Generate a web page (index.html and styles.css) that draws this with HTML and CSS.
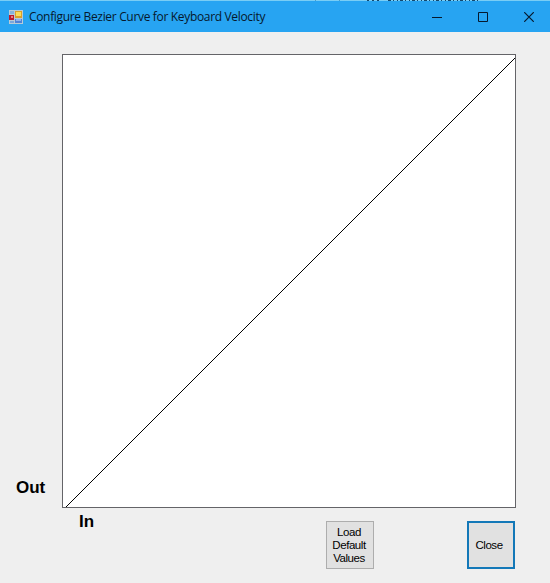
FILE: index.html
```html
<!DOCTYPE html>
<html lang="en">
<head>
<meta charset="utf-8">
<title>Configure Bezier Curve for Keyboard Velocity</title>
<link rel="stylesheet" href="styles.css">
</head>
<body>
<div class="window">
  <svg class="edge" width="550" height="1" viewBox="0 0 550 1" shape-rendering="crispEdges">
    <path d="M315 .5H316M339 .5H340" stroke="#4b9cc8"/>
    <path d="M367 .5H380" stroke="#14476c" stroke-dasharray="2 3"/>
    <path d="M388 .5H480" stroke="#14476c" stroke-dasharray="3 2 1 3 1 2"/>
  </svg>
  <header class="titlebar">
    <svg class="app-icon" width="14" height="14" viewBox="0 0 14 14" shape-rendering="crispEdges">
      <rect width="14" height="14" fill="#b9cbd6"/>
      <rect x="1" y="1" width="4" height="3" fill="#86b4dc"/>
      <rect x="0" y="5" width="5" height="5" fill="#b81c30"/>
      <rect x="2" y="6" width="2" height="2" fill="#ee7a7c"/>
      <rect x="6" y="1" width="7" height="7" fill="#d9a02c"/>
      <rect x="7" y="2" width="5" height="4" fill="#fbdc58"/>
      <rect x="1" y="11" width="4" height="2" fill="#7ba7dc"/>
      <rect x="6" y="9" width="7" height="4" fill="#4f83d8"/>
      <rect x="7" y="9" width="5" height="2" fill="#8fb1ea"/>
    </svg>
    <h1 class="title">Configure Bezier Curve for Keyboard Velocity</h1>
    <div class="controls">
      <svg width="10" height="10" viewBox="0 0 10 10"><path class="glyph" d="M0 5.5H10"/></svg>
      <svg width="10" height="10" viewBox="0 0 10 10"><path class="glyph" d="M.5 .5H9.5V9.5H.5Z"/></svg>
      <svg width="10" height="10" viewBox="0 0 10 10"><path class="glyph cross" d="M.2 .2L9.8 9.8M9.8 .2L.2 9.8"/></svg>
    </div>
  </header>
  <main class="content">
    <div class="axis-out">Out</div>
    <div class="plot">
      <svg width="452" height="452" viewBox="0 0 452 452" shape-rendering="crispEdges"><path class="curve" d="M2.5 452.5L452.5 2.5"/></svg>
    </div>
  </main>
  <footer class="footer">
    <div class="axis-in">In</div>
    <button class="button load">Load<br>Default<br>Values</button>
    <button class="button close">Close</button>
  </footer>
</div>
</body>
</html>
```
FILE: styles.css
```css
* { box-sizing: border-box; }
body { margin: 0; }
.window {
  width: 550px;
  height: 583px;
  overflow: hidden;
  background: #efefef;
  color: #000;
  font-family: "Liberation Sans", Arial, sans-serif;
}
.edge { display: block; background: #79cdf5; }
.titlebar {
  display: flex;
  align-items: center;
  height: 31px;
  padding: 1px 16px 0 9px;
  background: #27a4f2;
}
.app-icon { margin-right: 6px; }
.title {
  margin: 0;
  color: #06182c;
  font: 400 12px/16px "Open Sans", "Noto Sans", sans-serif;
  letter-spacing: -0.33px;
  white-space: nowrap;
}
.controls { display: flex; gap: 36px; margin-left: auto; }
.controls svg { display: block; }
.glyph { fill: none; stroke: #06182c; stroke-width: 1; }
.cross { stroke-width: 1.2; }
.content { display: flex; padding-top: 22px; }
.axis-out {
  width: 62px;
  padding: 424px 0 0 16px;
}
.axis-out, .axis-in { font-size: 17px; font-weight: 700; line-height: 20px; }
.plot {
  width: 454px;
  height: 454px;
  background: #fff;
  border: 1px solid #646468;
}
.plot svg { display: block; }
.curve { fill: none; stroke: #000; stroke-width: 1; }
.footer { display: flex; align-items: flex-start; padding: 4px 35px 0 79px; }
.axis-in { width: 247px; }
.button {
  width: 48px;
  height: 48px;
  margin: 9px 0 0;
  padding: 0;
  background: #e1e1e1;
  border: 1px solid #adadad;
  color: #000;
  font: 11.5px/13px "Liberation Sans", Arial, sans-serif;
  letter-spacing: -0.45px;
}
.load { padding-right: 2px; }
.close { margin-left: auto; padding-right: 4px; border: 2px solid #1378b8; }
```
